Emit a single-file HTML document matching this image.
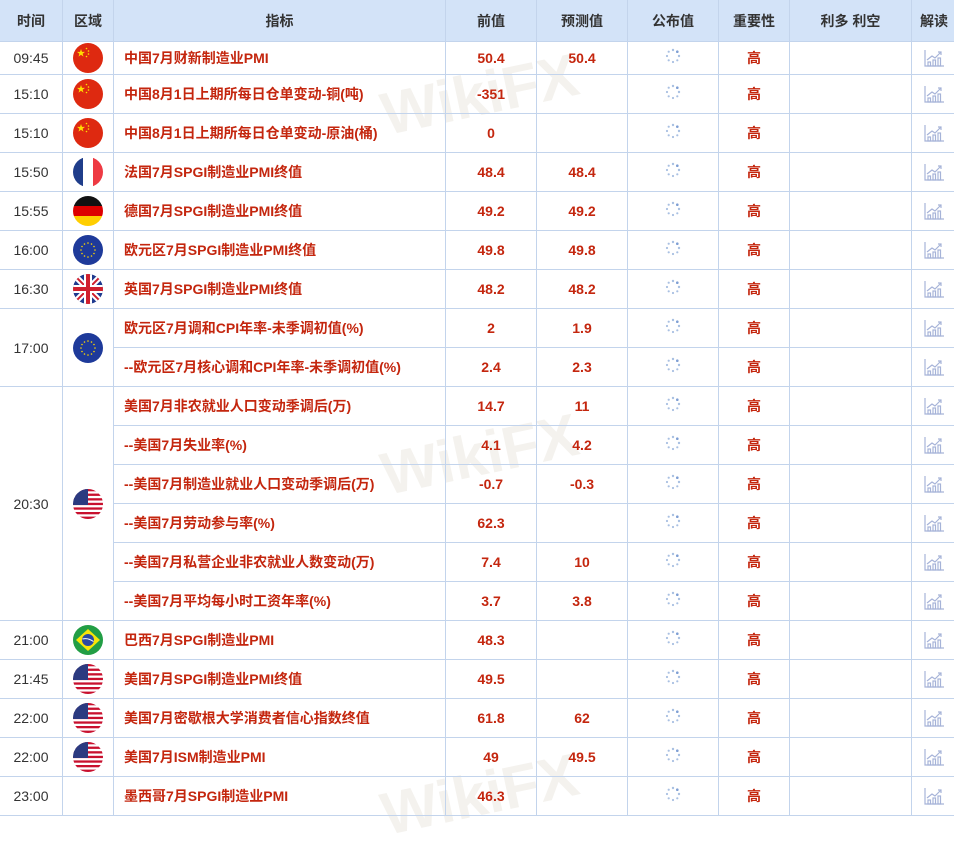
<!DOCTYPE html>
<html><head><meta charset="utf-8">
<style>
*{margin:0;padding:0;box-sizing:border-box}
body{width:954px;height:818px;overflow:hidden;background:#fff;font-family:"Liberation Sans","Noto Sans CJK SC",sans-serif;position:relative}
table{border-collapse:collapse;table-layout:fixed;width:957px;position:absolute;left:-1px;top:-1px}
td,th{border:1px solid #c3d4ec;text-align:center;vertical-align:middle;font-size:14px;padding:0}
th{background:#d3e3f8;color:#333;font-weight:bold;height:42px;font-size:14px}
td{height:39px;color:#c4260e;font-weight:bold}
tr.r1 td{height:33px}
td.t{color:#333;font-weight:normal}
td.n{text-align:left;padding-left:10px}
.f{width:30px;height:30px;display:block;margin:0 auto}
.sp{width:16px;height:16px;display:block;margin:-4px auto 0}
.ic{width:22px;height:20px;display:block;margin:0 auto}
.wm{position:absolute;font-size:60px;font-weight:bold;color:rgba(200,190,170,0.2);font-family:"Liberation Sans",sans-serif;transform:rotate(-12deg);pointer-events:none}
</style></head><body>
<svg width="0" height="0" style="position:absolute">
<defs>
<clipPath id="c"><circle cx="15" cy="15" r="15"/></clipPath>
<symbol id="cn" viewBox="0 0 30 30"><circle cx="15" cy="15" r="15" fill="#de2910"/><polygon points="8,6 9,8.9 12,8.9 9.6,10.7 10.5,13.6 8,11.8 5.5,13.6 6.4,10.7 4,8.9 7,8.9" fill="#ffde00"/><circle cx="13.5" cy="5.5" r=".8" fill="#ffde00"/><circle cx="15.5" cy="8" r=".8" fill="#ffde00"/><circle cx="15.5" cy="11" r=".8" fill="#ffde00"/><circle cx="13.5" cy="13.5" r=".8" fill="#ffde00"/></symbol>
<symbol id="fr" viewBox="0 0 30 30"><g clip-path="url(#c)"><rect width="10" height="30" fill="#1f3d8a"/><rect x="10" width="10" height="30" fill="#fff"/><rect x="20" width="10" height="30" fill="#ee3a43"/></g></symbol>
<symbol id="de" viewBox="0 0 30 30"><g clip-path="url(#c)"><rect width="30" height="10" fill="#111"/><rect y="10" width="30" height="10" fill="#dd0000"/><rect y="20" width="30" height="10" fill="#ffce00"/></g></symbol>
<symbol id="eu" viewBox="0 0 30 30"><circle cx="15" cy="15" r="15" fill="#1e3a9a"/><g fill="#ffd700"><circle cx="15" cy="8" r=".8"/><circle cx="18.5" cy="9" r=".8"/><circle cx="21" cy="11.5" r=".8"/><circle cx="22" cy="15" r=".8"/><circle cx="21" cy="18.5" r=".8"/><circle cx="18.5" cy="21" r=".8"/><circle cx="15" cy="22" r=".8"/><circle cx="11.5" cy="21" r=".8"/><circle cx="9" cy="18.5" r=".8"/><circle cx="8" cy="15" r=".8"/><circle cx="9" cy="11.5" r=".8"/><circle cx="11.5" cy="9" r=".8"/></g></symbol>
<symbol id="uk" viewBox="0 0 30 30"><g clip-path="url(#c)"><rect width="30" height="30" fill="#1f3a8f"/><path d="M0 0L30 30M30 0L0 30" stroke="#fff" stroke-width="6"/><path d="M0 0L30 30M30 0L0 30" stroke="#d0202e" stroke-width="2"/><path d="M15 0V30M0 15H30" stroke="#fff" stroke-width="8"/><path d="M15 0V30M0 15H30" stroke="#d0202e" stroke-width="4"/></g></symbol>
<symbol id="us" viewBox="0 0 30 30"><g clip-path="url(#c)"><rect width="30" height="30" fill="#fff"/><g fill="#c8102e"><rect y="0" width="30" height="2.3"/><rect y="4.6" width="30" height="2.3"/><rect y="9.2" width="30" height="2.3"/><rect y="13.8" width="30" height="2.3"/><rect y="18.4" width="30" height="2.3"/><rect y="23" width="30" height="2.3"/><rect y="27.6" width="30" height="2.4"/></g><rect width="15" height="16" fill="#2b3a80"/></g></symbol>
<symbol id="br" viewBox="0 0 30 30"><circle cx="15" cy="15" r="15" fill="#229e45"/><polygon points="15,4 27,15 15,26 3,15" fill="#f8e509"/><circle cx="15" cy="15" r="6" fill="#2b49a3"/><path d="M9.5 14 Q15 12.5 20.5 16.5" stroke="#fff" stroke-width="1" fill="none"/></symbol>
<symbol id="sp" viewBox="0 0 16 16"><g fill="#a9c0e2"><circle cx="8" cy="2" r="1.2"/><circle cx="12.3" cy="3.7" r="1.3" fill="#7f9fd4"/><circle cx="14" cy="8" r="1.2"/><circle cx="12.3" cy="12.3" r="1.1"/><circle cx="8" cy="14" r="1.1"/><circle cx="3.7" cy="12.3" r="1.1"/><circle cx="2" cy="8" r="1.1"/><circle cx="3.7" cy="3.7" r="1.1"/></g></symbol>
<symbol id="ic" viewBox="0 0 22 20"><g fill="none" stroke="#a6b3d8" stroke-width="1.2"><path d="M2 2V18H21"/><path d="M4 12L9 8L12 10L18 4"/><path d="M15 4H18V7"/><rect x="5" y="14" width="2.5" height="4"/><rect x="10" y="12" width="2.5" height="6"/><rect x="15" y="10" width="2.5" height="8"/></g></symbol>
</defs></svg>

<div class="wm" style="left:380px;top:60px">WikiFX</div>
<div class="wm" style="left:380px;top:420px">WikiFX</div>
<div class="wm" style="left:380px;top:760px">WikiFX</div>

<table>
<colgroup><col style="width:63px"><col style="width:51px"><col style="width:332px"><col style="width:91px"><col style="width:91px"><col style="width:91px"><col style="width:71px"><col style="width:122px"><col style="width:45px"></colgroup>
<tr><th>时间</th><th>区域</th><th>指标</th><th>前值</th><th>预测值</th><th>公布值</th><th>重要性</th><th>利多 利空</th><th>解读</th></tr>
<tr class="r1"><td class="t">09:45</td><td><svg class="f"><use href="#cn"/></svg></td><td class="n">中国7月财新制造业PMI</td><td>50.4</td><td>50.4</td><td><svg class="sp"><use href="#sp"/></svg></td><td>高</td><td></td><td><svg class="ic"><use href="#ic"/></svg></td></tr>
<tr><td class="t">15:10</td><td><svg class="f"><use href="#cn"/></svg></td><td class="n">中国8月1日上期所每日仓单变动-铜(吨)</td><td>-351</td><td></td><td><svg class="sp"><use href="#sp"/></svg></td><td>高</td><td></td><td><svg class="ic"><use href="#ic"/></svg></td></tr>
<tr><td class="t">15:10</td><td><svg class="f"><use href="#cn"/></svg></td><td class="n">中国8月1日上期所每日仓单变动-原油(桶)</td><td>0</td><td></td><td><svg class="sp"><use href="#sp"/></svg></td><td>高</td><td></td><td><svg class="ic"><use href="#ic"/></svg></td></tr>
<tr><td class="t">15:50</td><td><svg class="f"><use href="#fr"/></svg></td><td class="n">法国7月SPGI制造业PMI终值</td><td>48.4</td><td>48.4</td><td><svg class="sp"><use href="#sp"/></svg></td><td>高</td><td></td><td><svg class="ic"><use href="#ic"/></svg></td></tr>
<tr><td class="t">15:55</td><td><svg class="f"><use href="#de"/></svg></td><td class="n">德国7月SPGI制造业PMI终值</td><td>49.2</td><td>49.2</td><td><svg class="sp"><use href="#sp"/></svg></td><td>高</td><td></td><td><svg class="ic"><use href="#ic"/></svg></td></tr>
<tr><td class="t">16:00</td><td><svg class="f"><use href="#eu"/></svg></td><td class="n">欧元区7月SPGI制造业PMI终值</td><td>49.8</td><td>49.8</td><td><svg class="sp"><use href="#sp"/></svg></td><td>高</td><td></td><td><svg class="ic"><use href="#ic"/></svg></td></tr>
<tr><td class="t">16:30</td><td><svg class="f"><use href="#uk"/></svg></td><td class="n">英国7月SPGI制造业PMI终值</td><td>48.2</td><td>48.2</td><td><svg class="sp"><use href="#sp"/></svg></td><td>高</td><td></td><td><svg class="ic"><use href="#ic"/></svg></td></tr>
<tr><td class="t" rowspan="2">17:00</td><td rowspan="2"><svg class="f"><use href="#eu"/></svg></td><td class="n">欧元区7月调和CPI年率-未季调初值(%)</td><td>2</td><td>1.9</td><td><svg class="sp"><use href="#sp"/></svg></td><td>高</td><td></td><td><svg class="ic"><use href="#ic"/></svg></td></tr>
<tr><td class="n">--欧元区7月核心调和CPI年率-未季调初值(%)</td><td>2.4</td><td>2.3</td><td><svg class="sp"><use href="#sp"/></svg></td><td>高</td><td></td><td><svg class="ic"><use href="#ic"/></svg></td></tr>
<tr><td class="t" rowspan="6">20:30</td><td rowspan="6"><svg class="f"><use href="#us"/></svg></td><td class="n">美国7月非农就业人口变动季调后(万)</td><td>14.7</td><td>11</td><td><svg class="sp"><use href="#sp"/></svg></td><td>高</td><td></td><td><svg class="ic"><use href="#ic"/></svg></td></tr>
<tr><td class="n">--美国7月失业率(%)</td><td>4.1</td><td>4.2</td><td><svg class="sp"><use href="#sp"/></svg></td><td>高</td><td></td><td><svg class="ic"><use href="#ic"/></svg></td></tr>
<tr><td class="n">--美国7月制造业就业人口变动季调后(万)</td><td>-0.7</td><td>-0.3</td><td><svg class="sp"><use href="#sp"/></svg></td><td>高</td><td></td><td><svg class="ic"><use href="#ic"/></svg></td></tr>
<tr><td class="n">--美国7月劳动参与率(%)</td><td>62.3</td><td></td><td><svg class="sp"><use href="#sp"/></svg></td><td>高</td><td></td><td><svg class="ic"><use href="#ic"/></svg></td></tr>
<tr><td class="n">--美国7月私营企业非农就业人数变动(万)</td><td>7.4</td><td>10</td><td><svg class="sp"><use href="#sp"/></svg></td><td>高</td><td></td><td><svg class="ic"><use href="#ic"/></svg></td></tr>
<tr><td class="n">--美国7月平均每小时工资年率(%)</td><td>3.7</td><td>3.8</td><td><svg class="sp"><use href="#sp"/></svg></td><td>高</td><td></td><td><svg class="ic"><use href="#ic"/></svg></td></tr>
<tr><td class="t">21:00</td><td><svg class="f"><use href="#br"/></svg></td><td class="n">巴西7月SPGI制造业PMI</td><td>48.3</td><td></td><td><svg class="sp"><use href="#sp"/></svg></td><td>高</td><td></td><td><svg class="ic"><use href="#ic"/></svg></td></tr>
<tr><td class="t">21:45</td><td><svg class="f"><use href="#us"/></svg></td><td class="n">美国7月SPGI制造业PMI终值</td><td>49.5</td><td></td><td><svg class="sp"><use href="#sp"/></svg></td><td>高</td><td></td><td><svg class="ic"><use href="#ic"/></svg></td></tr>
<tr><td class="t">22:00</td><td><svg class="f"><use href="#us"/></svg></td><td class="n">美国7月密歇根大学消费者信心指数终值</td><td>61.8</td><td>62</td><td><svg class="sp"><use href="#sp"/></svg></td><td>高</td><td></td><td><svg class="ic"><use href="#ic"/></svg></td></tr>
<tr><td class="t">22:00</td><td><svg class="f"><use href="#us"/></svg></td><td class="n">美国7月ISM制造业PMI</td><td>49</td><td>49.5</td><td><svg class="sp"><use href="#sp"/></svg></td><td>高</td><td></td><td><svg class="ic"><use href="#ic"/></svg></td></tr>
<tr><td class="t">23:00</td><td></td><td class="n">墨西哥7月SPGI制造业PMI</td><td>46.3</td><td></td><td><svg class="sp"><use href="#sp"/></svg></td><td>高</td><td></td><td><svg class="ic"><use href="#ic"/></svg></td></tr>
</table>
</body></html>
